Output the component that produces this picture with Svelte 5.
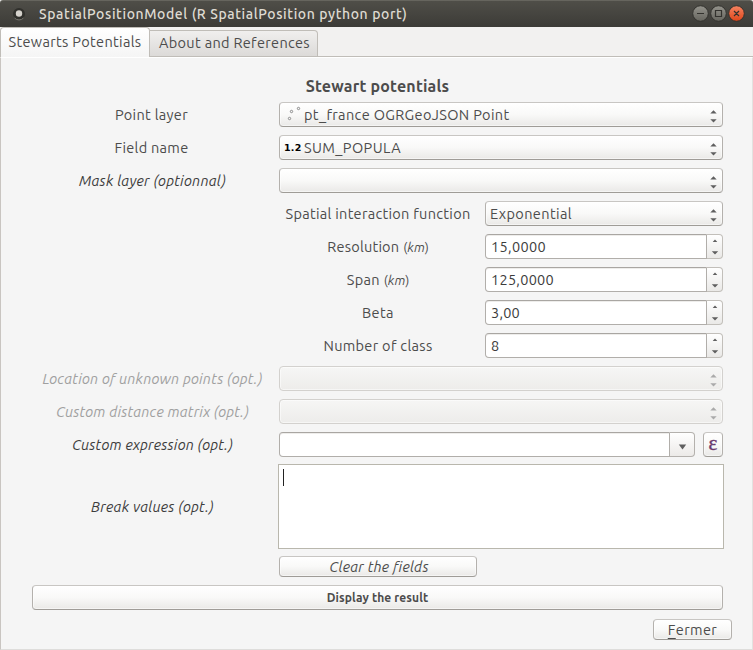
<script>
  const combos = [
    { label: 'Point layer', lw: 73, value: 'pt_france OGRGeoJSON Point', vw: 205.5, icon: 'points' },
    { label: 'Field name', lw: 74, value: 'SUM_POPULA', vw: 97, icon: 'number' },
    { label: 'Mask layer (optionnal)', lw: 147, value: '', italic: true }
  ];
  const spins = [
    { label: 'Resolution', lw: 72, unit: true, value: '15,0000', vw: 55 },
    { label: 'Span', lw: 33, unit: true, value: '125,0000', vw: 63 },
    { label: 'Beta', lw: 32, value: '3,00', vw: 29 },
    { label: 'Number of class', lw: 109, value: '8', vw: 8 }
  ];
  const disabled = [
    { label: 'Location of unknown points (opt.)', lw: 220 },
    { label: 'Custom distance matrix (opt.)', lw: 193 }
  ];

  // Tracks a text so that it takes the given advance width.
  function fit(node, width) {
    const natural = node.getBoundingClientRect().width;
    const gap = (width - natural) / node.textContent.length;
    node.style.letterSpacing = gap.toFixed(3) + 'px';
  }
</script>

{#snippet arrows()}
  <svg class="arrows" width="8" height="13" viewBox="0 0 8 13">
    <path d="M3.5 0.2 6.7 3.6H0.3Z M0.3 9.2H6.7L3.5 12.4Z" />
  </svg>
{/snippet}

<div class="window">
  <header>
    <svg class="app" width="14" height="14" viewBox="0 0 14 14">
      <circle cx="7" cy="7" r="6" fill="#30302c" /><path d="M2.5 11a6.2 6.2 0 0 0 9 0" fill="none" stroke="#77766f" />
      <circle cx="7" cy="6.5" r="3.2" fill="#d5d2cc" />
    </svg>
    <h1><span use:fit={368.5}>SpatialPositionModel (R SpatialPosition python port)</span></h1>
    <svg class="controls" width="54" height="18" viewBox="0 0 54 18">
      <defs>
        <linearGradient id="grey" x2="0" y2="1"><stop stop-color="#94938c" /><stop offset="1" stop-color="#66655e" /></linearGradient>
        <linearGradient id="red" x2="0" y2="1"><stop stop-color="#f58462" /><stop offset="1" stop-color="#df4519" /></linearGradient>
      </defs>
      <g stroke="#33322e" stroke-width="1">
        <circle cx="8.5" cy="8.5" r="7.8" fill="url(#grey)" />
        <circle cx="26.5" cy="8.5" r="7.8" fill="url(#grey)" />
        <circle cx="44.5" cy="8.5" r="7.8" fill="url(#red)" />
        <path d="M5 8.5h7M23.5 5.5h6v6h-6zM42 6l5 5M47 6l-5 5" fill="none" stroke-width="1.2" />
      </g>
    </svg>
  </header>

  <nav>
    <div class="tab active"><span use:fit={133}>Stewarts Potentials</span></div>
    <div class="tab"><span use:fit={151}>About and References</span></div>
  </nav>

  <main>
    <h2><span use:fit={143.5}>Stewart potentials</span></h2>
    <div class="form">
      {#each combos as c}
        <div class="row">
          <div class="label" class:italic={c.italic}><span use:fit={c.lw}>{c.label}</span></div>
          <div class="combo wide">
            {#if c.icon === 'points'}
              <svg width="19" height="17" viewBox="0 0 19 17" fill="#fafafa" stroke="#666" stroke-width=".7">
                <circle cx="5.5" cy="12.5" r="1.2" /><circle cx="7.5" cy="5.5" r="1.2" /><circle cx="14.5" cy="2.5" r="1.2" />
              </svg>
            {:else if c.icon === 'number'}
              <b class="number"><span use:fit={17.5}>1.2</span></b>
            {/if}
            {#if c.value}<span use:fit={c.vw}>{c.value}</span>{/if}
            {@render arrows()}
          </div>
        </div>
      {/each}

      <div class="row">
        <div class="label"></div>
        <div class="sub"><span use:fit={185}>Spatial interaction function</span></div>
        <div class="combo narrow"><span use:fit={82}>Exponential</span>{@render arrows()}</div>
      </div>

      {#each spins as s}
        <div class="row">
          <div class="label"></div>
          <div class="sub">
            <span use:fit={s.lw}>{s.label}</span>
            {#if s.unit}<small>(<i>km</i>)</small>{/if}
          </div>
          <div class="spin">
            <div class="field"><span use:fit={s.vw}>{s.value}</span></div>
            <div class="step">
              <svg width="8" height="17" viewBox="0 0 8 17"><path d="M4 .6 6.3 3H1.7Z M.8 12.2H7.2L4 15.4Z" /></svg>
            </div>
          </div>
        </div>
      {/each}

      {#each disabled as d}
        <div class="row off">
          <div class="label italic"><span use:fit={d.lw}>{d.label}</span></div>
          <div class="combo wide">{@render arrows()}</div>
        </div>
      {/each}

      <div class="row">
        <div class="label italic"><span use:fit={161}>Custom expression (opt.)</span></div>
        <div class="expr">
          <div class="field"></div>
          <div class="drop"><svg width="9" height="6" viewBox="0 0 9 6"><path d="M.8.5H8.2L4.5 5.5Z" /></svg></div>
        </div>
        <div class="epsilon">ε</div>
      </div>
    </div>

    <div class="row breaks">
      <div class="label italic"><span use:fit={123}>Break values (opt.)</span></div>
      <div class="area"><div class="caret"></div></div>
    </div>

    <div class="button clear"><span use:fit={99}>Clear the fields</span></div>
    <div class="button display"><span use:fit={101.5}>Display the result</span></div>
    <div class="button close"><span use:fit={49.5}><u>F</u>ermer</span></div>
  </main>
</div>

<style>
  :global(body) { margin: 0; background: #f5f5f5; }
  .window {
    width: 753px; height: 650px; box-sizing: border-box; overflow: hidden;
    display: flex; flex-direction: column; background: #f2f1f0;
    font: 14.5px/20px Ubuntu, "Noto Sans", sans-serif; color: #4c4c4c; white-space: nowrap;
  }
  .window * { box-sizing: border-box; }
  svg { flex: none; display: block; }
  header {
    height: 27px; flex: none; display: flex; align-items: center; padding: 0 7px 0 12px;
    background: linear-gradient(#4f4e48, #3c3b37); border-top: 1px solid #66655e; border-radius: 3px 3px 0 0; color: #dfdbd2;
  }
  h1 { margin: 0 auto 0 13px; font-size: 14px; line-height: 20px; font-weight: 500; }
  nav { display: flex; align-items: flex-end; height: 30px; flex: none; box-shadow: inset 0 -1px #c0bdb8; }
  .tab {
    height: 27px; width: 168px; padding: 2px 8px 0 9px; border: 1px solid #c0bdb8; border-left: 0;
    border-radius: 0 4px 0 0; background: linear-gradient(#f0efee, #dcdad8);
  }
  .tab.active { height: 30px; width: 150px; padding: 4px 0 0 7.5px; border-left: 1px solid #c0bdb8; border-bottom: 0; border-radius: 4px 4px 0 0; background: linear-gradient(#fff, #f5f5f5); }
  main {
    flex: 1; padding: 19px 29px 0 31px; display: flex; flex-direction: column; background: #f5f5f5;
    border: 1px solid #c9c5c1; border-top-color: #fff; border-right-color: #e3e2e0; border-bottom-color: #dedddb;
  }
  h2 { margin: 0 0 6px; height: 19px; font-size: 16px; line-height: 19px; font-weight: 700; text-align: center; }
  .form { display: flex; flex-direction: column; gap: 8px; }
  .row { display: flex; gap: 8px; height: 25px; }
  .label { width: 239px; flex: none; display: flex; justify-content: center; align-items: center; }
  .italic { font-style: italic; color: #3c3c3c; }
  .label.italic { padding-left: 2px; }
  .sub { width: 198px; display: flex; justify-content: center; align-items: baseline; gap: 4px; padding-top: 3px; }
  small { font-size: 13px; letter-spacing: -.1px; }
  .combo, .button, .epsilon {
    border: 1px solid #b4b1ad; border-top-color: #c8c6c3; border-bottom-color: #9f9c97; border-radius: 4px;
    background: linear-gradient(#fff, #f9f9f8 50%, #eae9e7); box-shadow: inset 0 0 0 1px #ffffff80;
  }
  .combo { display: flex; align-items: center; padding: 0 4px; }
  .combo.wide { width: 444px; }
  .combo.narrow { width: 238px; }
  .combo > svg:first-child:not(.arrows) { margin: 0 1px 0 0; }
  .arrows { margin-left: auto; position: relative; top: 2px; }
  svg path { fill: #5f5f5f; }
  header svg path { fill: none; }
  .number { width: 20px; font: bold 9.5px/12px "DejaVu Sans", sans-serif; color: #000; }
  .off .label { color: #a0a0a0; }
  .off .combo { border-color: #d3d1ce; background: linear-gradient(#f6f6f5, #edecea); }
  .off path { fill: #aaa; }
  .spin { width: 238px; display: flex; color: #3c3c3c; }
  .field { flex: 1; padding: 2px 5px; border: 1px solid #b1aeaa; border-top-color: #a9a6a2; border-radius: 4px 0 0 4px; background: #fff; box-shadow: inset 0 1px #eeedeb; }
  .step { width: 16px; display: flex; justify-content: center; padding-top: 4px; border: 1px solid #c2bfba; border-left: 0; border-radius: 0 4px 4px 0; background: linear-gradient(#fff, #eae9e7); }
  .expr { width: 416px; display: flex; }
  .drop { width: 25px; display: flex; justify-content: center; padding: 11px 0 0 1px; border: 1px solid #b4b1ad; border-left: 0; border-radius: 0 4px 4px 0; background: linear-gradient(#fff, #eceae8); }
  .epsilon { width: 20px; text-align: center; font: 21px/20px "Liberation Serif", serif; color: #68386c; -webkit-text-stroke: .4px #68386c; }
  .breaks { height: 85px; margin: 7px 0; gap: 7px; }
  .area { width: 446px; flex: none; border: 1px solid #b9b7ad; background: #fff; padding: 4px; }
  .caret { width: 1px; height: 17px; background: #222; }
  .button { display: flex; align-items: center; justify-content: center; flex: none; }
  .clear { width: 198px; height: 21px; margin-left: 247px; padding-left: 2px; font-style: italic; }
  .display { height: 25px; margin: 8px 0 9px; font-size: 12px; font-weight: 700; }
  .close { width: 79px; height: 21px; align-self: flex-end; margin-right: -9px; }
  u { text-underline-offset: 3px; }
</style>
